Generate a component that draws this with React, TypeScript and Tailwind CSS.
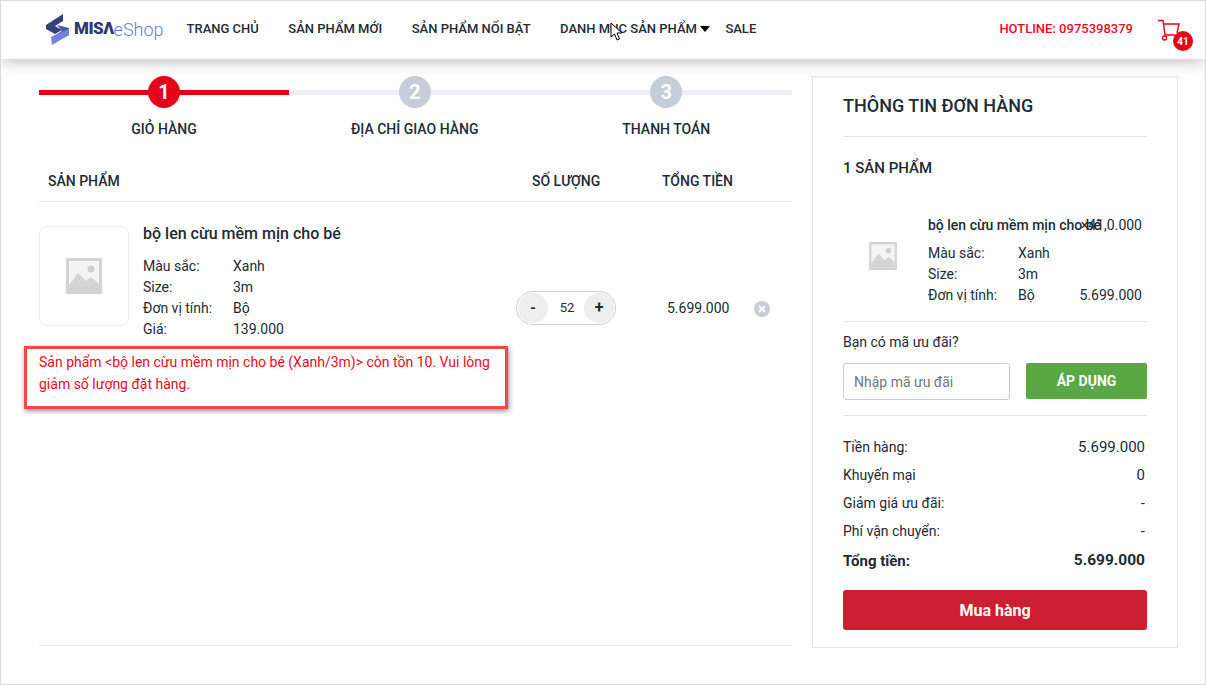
import React from 'react';

function ImageIcon({ size }: { size: number }) {
  return (
    <svg width={size} height={size} viewBox="0 0 36 36">
      <rect x="0" y="0" width="36" height="36" fill="#d4d4d4" />
      <rect x="3" y="3" width="30" height="30" fill="#f4f4f4" />
      <path d="M3 27 L12 15 L20 23 L25 19 L33 26 L33 33 L3 33 Z" fill="#d4d4d4" />
      <circle cx="25" cy="11" r="3.6" fill="#d0d0d0" />
    </svg>
  );
}

function Logo() {
  return (
    <div className="flex items-center">
      <svg width="26" height="32" viewBox="0 0 26 32">
        <path d="M1 12 L18 1 L18 8 L10 13 L17 17 L10 21 L1 16 Z" fill="#37407f" />
        <path d="M12 12 L24 15 L24 22 L14 27 L7 24 L17 18 Z" fill="#4c57b0" />
        <path d="M6 24 L24 16 L24 22 L7 32 Z" fill="#7780dc" />
      </svg>
      <span className="ml-[3px] text-[17px] font-black tracking-[-0.5px] text-[#2f3672]">MISΛ</span>
      <span className="text-[18px] font-light text-[#6f78d8]">eShop</span>
    </div>
  );
}

function Step({ n, label, active }: { n: number; label: string; active?: boolean }) {
  return (
    <div className={`flex flex-col items-center ${active ? 'w-[250px]' : 'flex-1'}`}>
      <div className="relative flex h-8 w-full items-center justify-center">
        <div className={`absolute inset-x-0 top-[14px] h-[5px] ${active ? 'bg-[#e60019]' : 'bg-[#eeeff4]'}`} />
        <div className={`relative flex h-8 w-8 items-center justify-center rounded-full text-[20px] font-bold text-white ${active ? 'bg-[#e60019]' : 'bg-[#c5ced8]'}`}>
          {n}
        </div>
      </div>
      <div className="mt-[11px] text-[14px] font-medium leading-[20px] text-[#212b36]">{label}</div>
    </div>
  );
}

function Attr({ label, value, right }: { label: string; value: string; right?: string }) {
  return (
    <div className="flex h-[21px] items-center text-[14px] text-[#212b36]">
      <span className="w-[90px]">{label}</span>
      <span className="flex-1">{value}</span>
      {right && <span>{right}</span>}
    </div>
  );
}

function SumRow({ label, value }: { label: string; value: string }) {
  return (
    <div className="flex h-[28px] items-center justify-between pr-[2px] text-[14px] text-[#212b36]">
      <span>{label}</span>
      <span className="text-[15px]">{value}</span>
    </div>
  );
}

export default function App() {
  const nav = ['TRANG CHỦ', 'SẢN PHẨM MỚI', 'SẢN PHẨM NỔI BẬT'];

  return (
    <div className="relative h-[685px] w-[1206px] overflow-hidden border border-[#d9d9d9] bg-white font-['Roboto',sans-serif]">
      {/* Header */}
      <header className="relative z-10 flex h-[58px] items-center bg-white pb-[2px] pl-[44px] pr-[15px] shadow-[0_4px_14px_rgba(0,0,0,0.22)]">
        <Logo />
        <nav className="ml-[23px] flex items-center gap-[29.5px] text-[13px] font-medium text-[#212b36]">
          {nav.map((item) => (
            <span key={item}>{item}</span>
          ))}
          <span className="flex items-center">
            DANH MỤC SẢN PHẨM
            <span className="ml-[3px] h-0 w-0 border-x-[5px] border-t-[6px] border-x-transparent border-t-black" />
          </span>
        </nav>
        <span className="ml-[15.5px] text-[13px] font-medium text-[#212b36]">SALE</span>
        <span className="ml-auto text-[13px] font-medium text-[#eb0a24]">HOTLINE: 0975398379</span>
        <div className="relative ml-[25px] mr-[6px] mt-[6px] h-[26px] w-[26px]">
          <svg width="24" height="24" viewBox="0 0 24 24" fill="none" stroke="#e60019" strokeWidth="1.4">
            <path d="M0 1.5 H5 L7 16 H17" />
            <path d="M5.5 5 H21 L19 14" />
            <circle cx="6.5" cy="19" r="2" />
          </svg>
          <span className="absolute left-[15px] top-[12px] flex h-[20px] w-[20px] items-center justify-center rounded-full bg-[#e60019] text-[10px] font-bold text-white">
            41
          </span>
        </div>
      </header>

      <div className="flex items-start pl-[38px] pt-[17px]">
        {/* Cart column */}
        <main className="flex h-[570px] w-[753px] flex-col border-b border-[#e4e6ea]">
          <div className="flex">
            <Step n={1} label="GIỎ HÀNG" active />
            <Step n={2} label="ĐỊA CHỈ GIAO HÀNG" />
            <Step n={3} label="THANH TOÁN" />
          </div>

          <div className="mt-[20px] flex h-[43px] items-center border-b border-[#e4e6ea] pt-[2px] text-[14px] font-medium text-[#212b36]">
            <span className="ml-[9px] w-[484px]">SẢN PHẨM</span>
            <span className="w-[130px]">SỐ LƯỢNG</span>
            <span>TỔNG TIỀN</span>
          </div>

          <div className="mt-[24px] flex">
            <div className="flex h-[100px] w-[90px] items-center justify-center rounded-[8px] border border-[#eeeeee]">
              <ImageIcon size={36} />
            </div>
            <div className="ml-[14px] w-[373px]">
              <div className="text-[16px] font-medium leading-[16px] text-[#212b36]">bộ len cừu mềm mịn cho bé</div>
              <div className="mt-[14px]">
                <Attr label="Màu sắc:" value="Xanh" />
                <Attr label="Size:" value="3m" />
                <Attr label="Đơn vị tính:" value="Bộ" />
                <Attr label="Giá:" value="139.000" />
              </div>
            </div>
            <div className="mt-[65px] flex h-[34px] w-[100px] items-center justify-between self-start rounded-full border border-[#cfcfcf] p-[1px]">
              <span className="flex h-[30px] w-[30px] items-center justify-center rounded-full bg-[#eeeeee] text-[14px] font-bold text-[#212b36]">-</span>
              <span className="ml-[2px] text-[13px] text-[#212b36]">52</span>
              <span className="flex h-[30px] w-[30px] items-center justify-center rounded-full bg-[#eeeeee] text-[16px] font-bold text-[#212b36]">+</span>
            </div>
            <span className="ml-[51px] mt-[73px] self-start text-[14px] leading-[18px] text-[#212b36]">5.699.000</span>
            <span className="ml-[25px] mt-[75px] flex h-[16px] w-[16px] items-center justify-center self-start rounded-full bg-[#c5ced8]">
              <svg width="10" height="10" viewBox="0 0 10 10" stroke="#ffffff" strokeWidth="2">
                <path d="M2 2 L8 8 M8 2 L2 8" />
              </svg>
            </span>
          </div>

          <div className="relative mt-[10px] w-[470px] text-[14px] leading-[22px] text-[#eb0a24]">
            <div className="absolute -left-[15px] -top-[4px] h-[63px] w-[484px] border-[3px] border-[#f04848] shadow-[1px_2px_5px_rgba(0,0,0,0.45)]" />
            <p className="relative pt-[1px]">
              Sản phẩm &lt;bộ len cừu mềm mịn cho bé (Xanh/3m)&gt; còn tồn 10. Vui lòng giảm số lượng đặt hàng.
            </p>
          </div>
        </main>

        {/* Order summary */}
        <aside className="ml-[20px] flex h-[572px] w-[366px] flex-col border border-[#e4e6ea] bg-white px-[30px]">
          <div className="flex h-[60px] items-center border-b border-[#e4e6ea] pb-[2px] text-[18px] font-medium text-[#212b36]">
            THÔNG TIN ĐƠN HÀNG
          </div>
          <div className="mt-[21px] text-[15px] font-medium leading-[20px] text-[#212b36]">1 SẢN PHẨM</div>

          <div className="mt-[37px] flex h-[107px] border-b border-[#e4e6ea] pr-[5px]">
            <div className="mr-[5px] flex h-[82px] w-[80px] items-center justify-center">
              <ImageIcon size={28} />
            </div>
            <div className="relative flex-1">
              <div className="text-[14px] font-medium leading-[20px] text-[#212b36]">bộ len cừu mềm mịn cho bé</div>
              <span className="absolute right-0 top-0 text-[14px] leading-[20px] text-[#212b36]">×41,0.000</span>
              <div className="mt-[8px]">
                <Attr label="Màu sắc:" value="Xanh" />
                <Attr label="Size:" value="3m" />
                <Attr label="Đơn vị tính:" value="Bộ" right="5.699.000" />
              </div>
            </div>
          </div>

          <div className="mt-[10px] text-[14px] leading-[20px] text-[#212b36]">Bạn có mã ưu đãi?</div>
          <div className="mt-[11px] flex h-[38px] justify-between">
            <input
              placeholder="Nhập mã ưu đãi"
              className="h-[37px] w-[167px] rounded-[3px] border border-[#c5ced8] px-[10px] text-[14px] text-[#212b36] outline-none placeholder:text-[#6f7780]"
            />
            <button className="h-[36px] w-[121px] rounded-[2px] bg-[#5aa845] text-[14px] font-bold text-white">ÁP DỤNG</button>
          </div>

          <div className="mt-[14px] border-t border-[#e4e6ea] pt-[17px]">
            <SumRow label="Tiền hàng:" value="5.699.000" />
            <SumRow label="Khuyến mại" value="0" />
            <SumRow label="Giảm giá ưu đãi:" value="-" />
            <SumRow label="Phí vận chuyển:" value="-" />
            <div className="flex h-[32px] items-center justify-between pr-[2px] font-bold text-[#212b36]">
              <span className="text-[15px]">Tổng tiền:</span>
              <span className="text-[15.5px]">5.699.000</span>
            </div>
          </div>
          <button className="mt-[13px] h-[40px] w-full rounded-[3px] bg-[#cd1f32] pt-[2px] text-[16px] font-bold text-white">Mua hàng</button>
        </aside>
      </div>

      {/* Mouse pointer captured in the shot */}
      <svg className="absolute left-[609px] top-[21px] z-20" width="14" height="20" viewBox="0 0 14 20">
        <path d="M1 1 V15 L4.5 12 L7 18 L9.5 17 L7 11 H12 Z" fill="#ffffff" stroke="#000000" strokeWidth="1" />
      </svg>
    </div>
  );
}
